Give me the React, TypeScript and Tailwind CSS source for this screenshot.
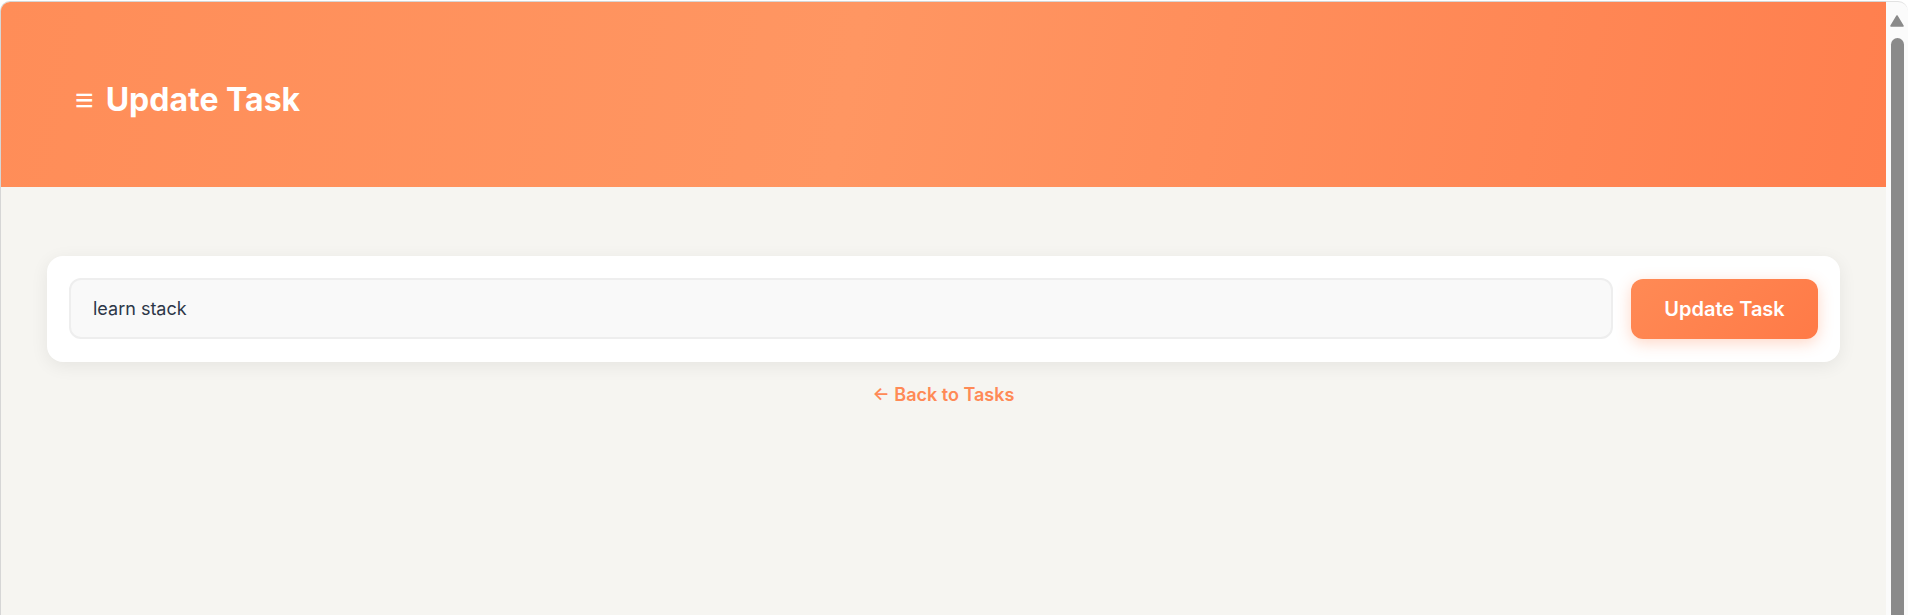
import React, { useState } from "react";

const UpdateTaskPage = () => {
  const [task, setTask] = useState<string>("learn stack");

  return (
    <div className="flex-1 min-w-0 mt-px border-l border-t border-[#d6d6d6] rounded-tl-[10px] overflow-hidden bg-[#f6f5f1] flex flex-col">
      <header className="h-[185px] shrink-0 pl-[74px] pt-[82px] bg-[linear-gradient(100deg,#ff8d58_0%,#ff9662_45%,#ff7f4e_100%)]">
        <h1 className="flex items-center text-white text-[32px] leading-[32px] font-bold">
          <span className="text-[32px] font-semibold mr-[12px]">≡</span>
          <span>Update Task</span>
        </h1>
      </header>

      <main className="px-[46px] pt-[69px]">
        <form
          className="bg-white rounded-[16px] shadow-[0_4px_18px_rgba(0,0,0,0.07)] px-[22px] pt-[22px] pb-[23px] flex items-center gap-[18px]"
          onSubmit={(e) => e.preventDefault()}
        >
          <input
            type="text"
            value={task}
            onChange={(e) => setTask(e.target.value)}
            className="flex-1 h-[61px] rounded-[12px] border-2 border-[#eeeeee] bg-[#f9f9f9] pl-[22px] text-[18px] text-[#2d3748] outline-none"
          />
          <button
            type="submit"
            className="h-[60px] w-[187px] rounded-[12px] bg-[linear-gradient(135deg,#ff8a55,#ff7a47)] text-white text-[20px] font-semibold shadow-[0_4px_15px_rgba(255,122,71,0.3)]"
          >
            Update Task
          </button>
        </form>

        <div className="mt-[19px] text-center">
          <a href="#" className="text-[#ff8a56] text-[18px] leading-[27px] font-semibold">
            ← Back to Tasks
          </a>
        </div>
      </main>
    </div>
  );
};

// fake browser scrollbar on the right edge of the screenshot
const ScrollTrack = () => (
  <div className="w-[22px] shrink-0 mt-px border-t border-[#e2e2e2] rounded-tr-[10px] bg-[#fbfbfb] flex flex-col items-center pt-[13px]">
    <svg width="14" height="12" viewBox="0 0 14 12">
      <path d="M7 1 L13 11 L1 11 Z" fill="#8a8a8a" stroke="#8a8a8a" strokeLinejoin="round" strokeWidth="1.5" />
    </svg>
    <div className="mt-[11px] w-[13px] flex-1 bg-[#8a8a8a] rounded-t-[7px] ml-px" />
  </div>
);

export default function App() {
  return (
    <div className="h-[615px] w-full flex bg-white overflow-hidden font-['Inter','Noto_Sans',sans-serif]">
      <UpdateTaskPage />
      <ScrollTrack />
    </div>
  );
}
